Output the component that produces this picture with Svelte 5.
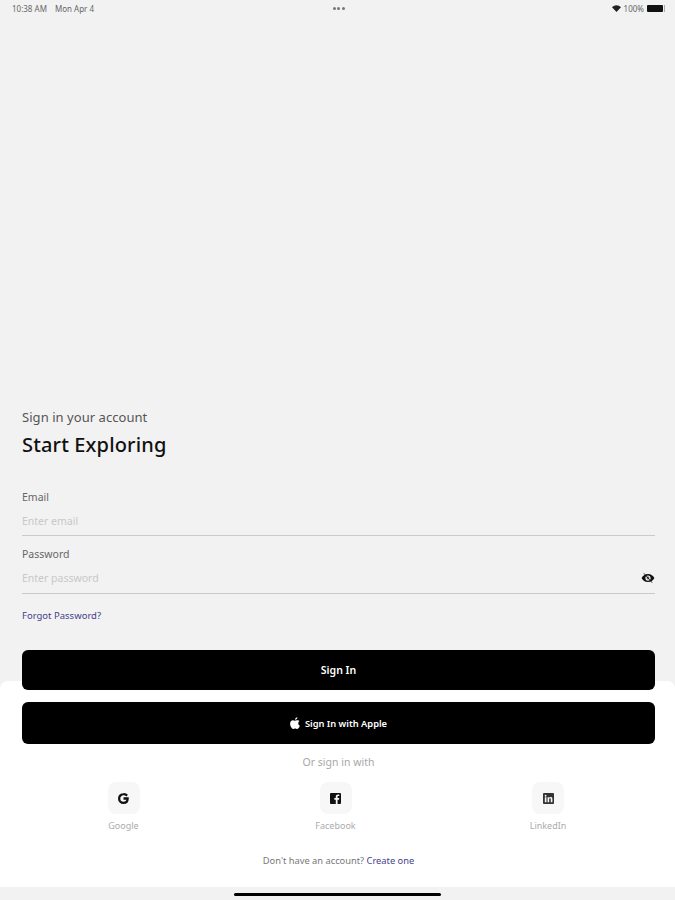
<script>
  const socials = [
    { name: 'Google', icon: 'google' },
    { name: 'Facebook', icon: 'facebook' },
    { name: 'LinkedIn', icon: 'linkedin' },
  ];
</script>

<div class="page">
  <div class="status">
    <div class="status-left">
      <span>10:38 AM</span>
      <span>Mon Apr 4</span>
    </div>
    <div class="dots"><i></i><i></i><i></i></div>
    <div class="status-right">
      <svg width="9" height="7" viewBox="0 0 16 12" aria-hidden="true">
        <path d="M8 12 0 3.6C4.6-1.2 11.4-1.2 16 3.6Z" fill="#222" />
      </svg>
      <span>100%</span>
      <div class="battery"><b></b></div>
    </div>
  </div>

  <main class="form">
    <p class="sub">Sign in your account</p>
    <h1>Start Exploring</h1>

    <div class="field">
      <span class="label">Email</span>
      <div class="input short"><span>Enter email</span></div>
    </div>
    <div class="field second">
      <span class="label">Password</span>
      <div class="input">
        <span>Enter password</span>
        <svg width="14" height="14" viewBox="0 0 24 24" aria-hidden="true">
          <path
            fill="#111"
            fill-rule="evenodd"
            d="M12 5C7 5 2.7 8 1 12c1.7 4 6 7 11 7s9.300-3 11-7c-1.700-4-6-7-11-7Zm0 11.500a4.500 4.500 0 1 1 0-9 4.500 4.500 0 0 1 0 9Z"
          />
          <circle cx="12" cy="12" r="2.400" fill="#666" />
          <path d="M5 4 19 20" stroke="#111" stroke-width="1.500" />
        </svg>
      </div>
    </div>

    <a class="forgot" href="#forgot">Forgot Password?</a>
    <button class="btn primary">Sign In</button>
  </main>

  <section class="sheet">
    <button class="btn apple">
      <svg width="10" height="12" viewBox="0 0 814 1000" aria-hidden="true">
        <path
          fill="#fff"
          d="M788 341c-6 4-108 62-108 190 0 149 130 201 134 203-1 3-21 72-69 142-43 62-88 123-156 123s-86-39-164-39c-77 0-104 41-167 41s-106-58-156-128C44 791 0 671 0 556c0-184 120-282 238-282 63 0 115 41 155 41 38 0 97-44 168-44 27 0 124 3 227 70ZM555 169c30-35 51-84 51-133 0-7-1-14-2-19-49 2-106 32-141 72-27 31-52 80-52 130 0 7 1 15 2 17 3 1 8 1 13 1 44 0 99-29 129-68Z"
        />
      </svg>
      Sign In with Apple
    </button>

    <p class="or">Or sign in with</p>

    <div class="socials">
      {#each socials as item}
        <div class="social">
          <div class="tile">
            {#if item.icon === 'google'}
              <svg width="11" height="11" viewBox="0 0 24 24" aria-hidden="true">
                <path
                  fill="none"
                  stroke="#111"
                  stroke-width="5"
                  d="M20 5.600A11 11 0 0 0 12 2.500a9.500 9.500 0 1 0 0 19c5.500 0 9-3.500 9-9.500h-9"
                />
              </svg>
            {:else if item.icon === 'facebook'}
              <svg width="11" height="11" viewBox="0 0 24 24" aria-hidden="true">
                <path
                  fill="#111"
                  d="M2 0h20a2 2 0 0 1 2 2v20a2 2 0 0 1-2 2h-5.500v-9.500h3.200l.5-3.700h-3.700V8.400c0-1.100.3-1.800 1.800-1.800h2V3.300c-.4 0-1.500-.1-2.900-.1-2.900 0-4.800 1.700-4.800 4.900v2.700H9.400v3.700h3.200V24H2a2 2 0 0 1-2-2V2a2 2 0 0 1 2-2Z"
                />
              </svg>
            {:else}
              <svg width="11" height="11" viewBox="0 0 24 24" aria-hidden="true">
                <path
                  fill="#333"
                  fill-rule="evenodd"
                  d="M2 0h20a2 2 0 0 1 2 2v20a2 2 0 0 1-2 2H2a2 2 0 0 1-2-2V2a2 2 0 0 1 2-2Zm2 9v11h3.500V9Zm1.700-5a2 2 0 1 0 0 4 2 2 0 0 0 0-4ZM10 9v11h3.500v-6c0-1.600.8-2.300 1.900-2.300s1.600.8 1.600 2.300v6h3.500v-6.800c0-3-1.600-4.400-3.800-4.400-1.500 0-2.600.7-3.200 1.700V9Z"
                />
              </svg>
            {/if}
          </div>
          <span>{item.name}</span>
        </div>
      {/each}
    </div>

    <p class="signup">Don't have an account? <a href="#create">Create one</a></p>
  </section>

  <div class="home-bar"><i></i></div>
</div>

<style>
  :global(body) {
    margin: 0;
    background: #f2f2f2;
  }

  .page {
    display: flex;
    flex-direction: column;
    height: 900px;
    overflow: hidden;
    background: #f2f2f2;
    font-family: 'Noto Sans', sans-serif;
    color: #111;
  }

  .status {
    display: grid;
    grid-template-columns: 1fr auto 1fr;
    align-items: center;
    height: 16px;
    padding: 0 10px 0 12px;
    font-size: 8px;
    color: #666;
  }

  .status-left {
    display: flex;
    gap: 8px;
  }

  .dots {
    display: flex;
    gap: 1.500px;
  }

  .dots i {
    width: 3px;
    height: 3px;
    border-radius: 50%;
    background: #777;
  }

  .status-right {
    display: flex;
    justify-content: flex-end;
    align-items: center;
    gap: 3px;
  }

  .battery {
    display: flex;
    width: 16px;
    height: 7px;
    padding-right: 1px;
    border-right: 1px solid #aaa;
  }

  .battery b {
    flex: 1;
    border-radius: 1px;
    background: #111;
  }

  .form {
    flex: 1;
    display: flex;
    flex-direction: column;
    justify-content: flex-end;
    padding: 0 20px 0 22px;
  }

  .sub {
    margin: 0;
    font-size: 13px;
    line-height: 18px;
    letter-spacing: 0.05px;
    color: #555;
  }

  h1 {
    margin: 5px 0 31px;
    font-size: 20px;
    line-height: 27px;
    font-weight: 500;
    letter-spacing: 0.15px;
    color: #111;
  }

  .field {
    display: flex;
    flex-direction: column;
  }

  .field.second {
    margin-top: 10px;
  }

  .label {
    font-size: 10.500px;
    line-height: 16px;
    color: #666;
  }

  .input {
    display: flex;
    justify-content: space-between;
    align-items: center;
    height: 32px;
    box-sizing: border-box;
    padding-top: 1px;
    border-bottom: 1px solid #cacaca;
    font-size: 10.500px;
    color: #c8c8c8;
  }

  .input.short {
    height: 31px;
  }

  .forgot {
    margin: 15px 0 27px;
    font-size: 9.500px;
    line-height: 14px;
    color: #46408a;
    text-decoration: none;
  }

  .btn {
    display: flex;
    justify-content: center;
    align-items: center;
    gap: 5px;
    width: 100%;
    height: 40px;
    padding: 0;
    border: 0;
    border-radius: 6px;
    background: #000;
    color: #fff;
    font-family: inherit;
    font-size: 10.500px;
    font-weight: 600;
  }

  .primary {
    position: relative;
  }

  .sheet {
    margin-top: -9px;
    height: 206px;
    box-sizing: border-box;
    padding: 21px 20px 0 22px;
    border-radius: 8px 8px 0 0;
    background: #fff;
  }

  .apple {
    height: 42px;
    font-size: 9.300px;
  }

  .or {
    margin: 11px 0 0;
    text-align: center;
    font-size: 10.500px;
    line-height: 14px;
    color: #a8a8a8;
  }

  .socials {
    display: grid;
    grid-template-columns: 211px 213px 212px;
    margin: 13px 0 0 -22px;
    width: 675px;
    padding: 0 21px 0 18px;
    box-sizing: border-box;
  }

  .social {
    display: flex;
    flex-direction: column;
    align-items: center;
    gap: 5px;
    font-size: 9px;
    line-height: 13px;
    color: #ababab;
  }

  .tile {
    display: flex;
    justify-content: center;
    align-items: center;
    width: 32px;
    height: 32px;
    border-radius: 8px;
    background: #f7f7f7;
  }

  .signup {
    margin: 22px 0 0;
    text-align: center;
    font-size: 9.300px;
    line-height: 13px;
    color: #777;
  }

  .signup a {
    color: #46408a;
    text-decoration: none;
  }

  .home-bar {
    display: flex;
    justify-content: center;
    align-items: flex-end;
    height: 13px;
    padding-bottom: 4px;
    box-sizing: border-box;
  }

  .home-bar i {
    width: 207px;
    height: 3px;
    border-radius: 2px;
    background: #000;
  }
</style>
